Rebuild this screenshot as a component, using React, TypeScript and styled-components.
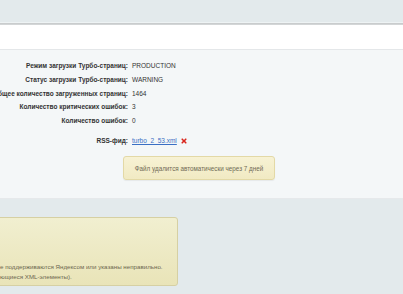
import React from "react";
import styled, { createGlobalStyle } from "styled-components";

const GlobalStyle = createGlobalStyle`
  html, body {
    margin: 0;
    padding: 0;
    background: #e3eaec;
    font-family: "Liberation Sans", Arial, sans-serif;
    overflow: hidden;
  }
`;

const rows = [
  { label: "Режим загрузки Турбо-страниц:", value: "PRODUCTION" },
  { label: "Статус загрузки Турбо-страниц:", value: "WARNING" },
  { label: "Общее количество загруженных страниц:", value: "1464" },
  { label: "Количество критических ошибок:", value: "3" },
  { label: "Количество ошибок:", value: "0" },
];

const App = () => {
  return (
    <>
      <GlobalStyle />
      <S.Page>
        <S.TopBar />
        <S.Header />
        <S.Panel>
          <S.InfoGrid>
            {rows.map((row) => (
              <React.Fragment key={row.label}>
                <S.Label>{row.label}</S.Label>
                <S.Value>{row.value}</S.Value>
              </React.Fragment>
            ))}
            <S.Label $rss>RSS-фид:</S.Label>
            <S.Value $rss>
              <S.Link href="#">turbo_2_53.xml</S.Link>
              <S.Remove viewBox="0 0 10 10" aria-label="удалить">
                <path d="M2 2 L8 8 M8 2 L2 8" stroke="#d9261c" strokeWidth="2.6" strokeLinecap="round" />
              </S.Remove>
            </S.Value>
          </S.InfoGrid>
          <S.Notice>Файл удалится автоматически через 7 дней</S.Notice>
        </S.Panel>
        <S.Warning>
          <S.WarningLine>е поддерживаются Яндексом или указаны неправильно.</S.WarningLine>
          <S.WarningLine>ющиеся XML-элементы).</S.WarningLine>
        </S.Warning>
      </S.Page>
    </>
  );
};

export default App;

const S = {
  Page: styled.div`
    width: 403px;
    height: 294px;
    display: flex;
    flex-direction: column;
    background: #e3eaec;
    overflow: hidden;
  `,
  TopBar: styled.div`
    height: 22px;
    border-bottom: 1px solid #eef3f4;
    box-shadow: 0 1px 0 #c9cccd, 0 2px 0 #d3d6d7;
    flex-shrink: 0;
  `,
  Header: styled.div`
    height: 24px;
    margin-top: 2px;
    background: #ffffff;
    border-bottom: 1px solid #e4e7e9;
    flex-shrink: 0;
  `,
  Panel: styled.div`
    height: 149px;
    background: #f4f7f8;
    border-bottom: 1px solid #e6e9eb;
    flex-shrink: 0;
    padding-top: 12px;
    box-sizing: border-box;
  `,
  InfoGrid: styled.div`
    display: grid;
    grid-template-columns: 128px 1fr;
    column-gap: 4px;
    row-gap: 5.5px;
    font-size: 6.5px;
    line-height: 8.3px;
    color: #333;
  `,
  Label: styled.div<{ $rss?: boolean }>`
    display: flex;
    justify-content: flex-end;
    white-space: nowrap;
    font-weight: bold;
    margin-top: ${(p) => (p.$rss ? "6px" : "0")};
  `,
  Value: styled.div<{ $rss?: boolean }>`
    display: flex;
    align-items: center;
    gap: 4px;
    white-space: nowrap;
    margin-top: ${(p) => (p.$rss ? "6px" : "0")};
  `,
  Link: styled.a`
    color: #3a6fc4;
    text-decoration: underline;
  `,
  Remove: styled.svg`
    width: 6px;
    height: 6px;
  `,
  Notice: styled.div`
    width: 152px;
    height: 24px;
    margin: 11px 0 0 123px;
    box-sizing: border-box;
    display: flex;
    align-items: center;
    justify-content: center;
    background: linear-gradient(#f7f2d4, #f1eac3);
    border: 1px solid #e3d9a6;
    border-radius: 3px;
    box-shadow: 0 1px 1px rgba(0, 0, 0, 0.06);
    font-size: 6.3px;
    color: #6f6a55;
  `,
  Warning: styled.div`
    width: 220px;
    height: 69px;
    margin: 18px 0 0 -42px;
    box-sizing: border-box;
    padding: 44px 0 0 42px;
    background: linear-gradient(#f1efd0, #e9e4b8);
    border: 1px solid #d6d0a3;
    border-radius: 3px;
    flex-shrink: 0;
    font-size: 6.2px;
    line-height: 9.5px;
    color: #6d6850;
  `,
  WarningLine: styled.div`
    white-space: nowrap;
    margin-left: -1px;
  `,
};
